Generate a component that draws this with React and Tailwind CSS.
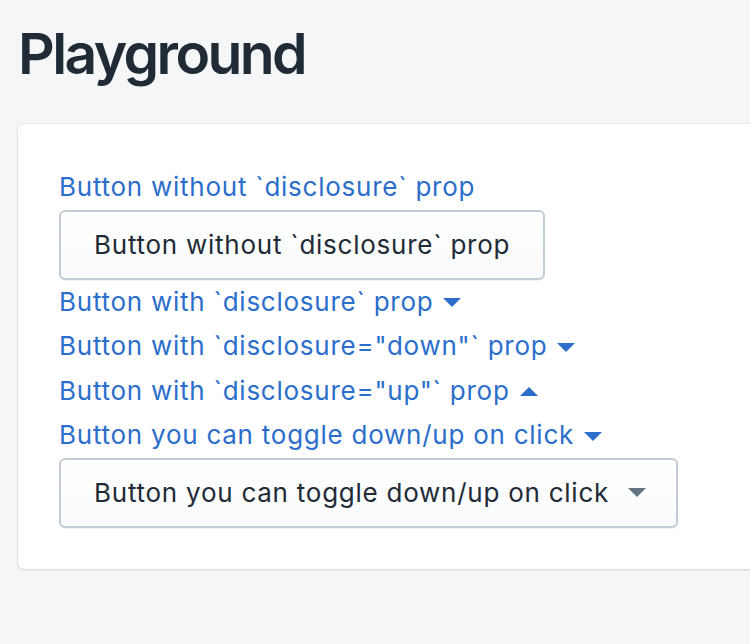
import React, { useState } from "react";

const Caret = ({ up = false, className = "" }) => (
    <svg width="18" height="9" viewBox="0 0 18 9" className={className} aria-hidden="true">
        {up ? <path d="M0 9 L9 0 L18 9 Z" fill="currentColor" /> : <path d="M0 0 L18 0 L9 9 Z" fill="currentColor" />}
    </svg>
);

const LinkRow = ({ children, caret }) => (
    <button className="flex items-center h-[44.5px] text-[26px] tracking-[0.75px] text-[#2c6ecb] leading-none whitespace-nowrap">
        <span>{children}</span>
        {caret && <Caret up={caret === "up"} className="ml-[10px] mt-[2px]" />}
    </button>
);

const App = () => {
    const [open, setOpen] = useState(false);

    return (
        <div className="min-h-screen bg-[#f4f6f8] overflow-hidden" style={{ fontFamily: "Inter, 'Noto Sans', sans-serif" }}>
            <h1 className="pl-[18px] pt-[22px] text-[57px] leading-[64px] font-semibold text-[#212b36] tracking-[-2.6px]">
                Playground
            </h1>

            <div className="ml-[18px] mt-[38px] w-[760px] bg-white rounded-l-[6px] shadow-[0_0_0_1px_rgba(63,63,68,0.05),0_1px_3px_0_rgba(63,63,68,0.15)] px-[41px] py-[41px]">
                <LinkRow>Button without `disclosure` prop</LinkRow>
                <button className="h-[70px] px-[33px] rounded-[6px] border-2 border-[#c4cdd5] bg-gradient-to-b from-white to-[#f9fafb] shadow-[0_1px_0_0_rgba(22,29,37,0.05)] text-[26px] tracking-[0.75px] text-[#212b36] whitespace-nowrap">
                    Button without `disclosure` prop
                </button>
                <LinkRow caret="down">Button with `disclosure` prop</LinkRow>
                <LinkRow caret="down">Button with `disclosure="down"` prop</LinkRow>
                <LinkRow caret="up">Button with `disclosure="up"` prop</LinkRow>
                <LinkRow caret="down">Button you can toggle down/up on click</LinkRow>
                <button
                    onClick={() => setOpen(!open)}
                    className="flex items-center h-[70px] pl-[33px] pr-[30px] rounded-[6px] border-2 border-[#c4cdd5] bg-gradient-to-b from-white to-[#f9fafb] shadow-[0_1px_0_0_rgba(22,29,37,0.05)] text-[26px] tracking-[0.75px] text-[#212b36] whitespace-nowrap"
                >
                    <span>Button you can toggle down/up on click</span>
                    <Caret up={open} className="ml-[19px] text-[#637381]" />
                </button>
            </div>
        </div>
    );
};

export default App;
